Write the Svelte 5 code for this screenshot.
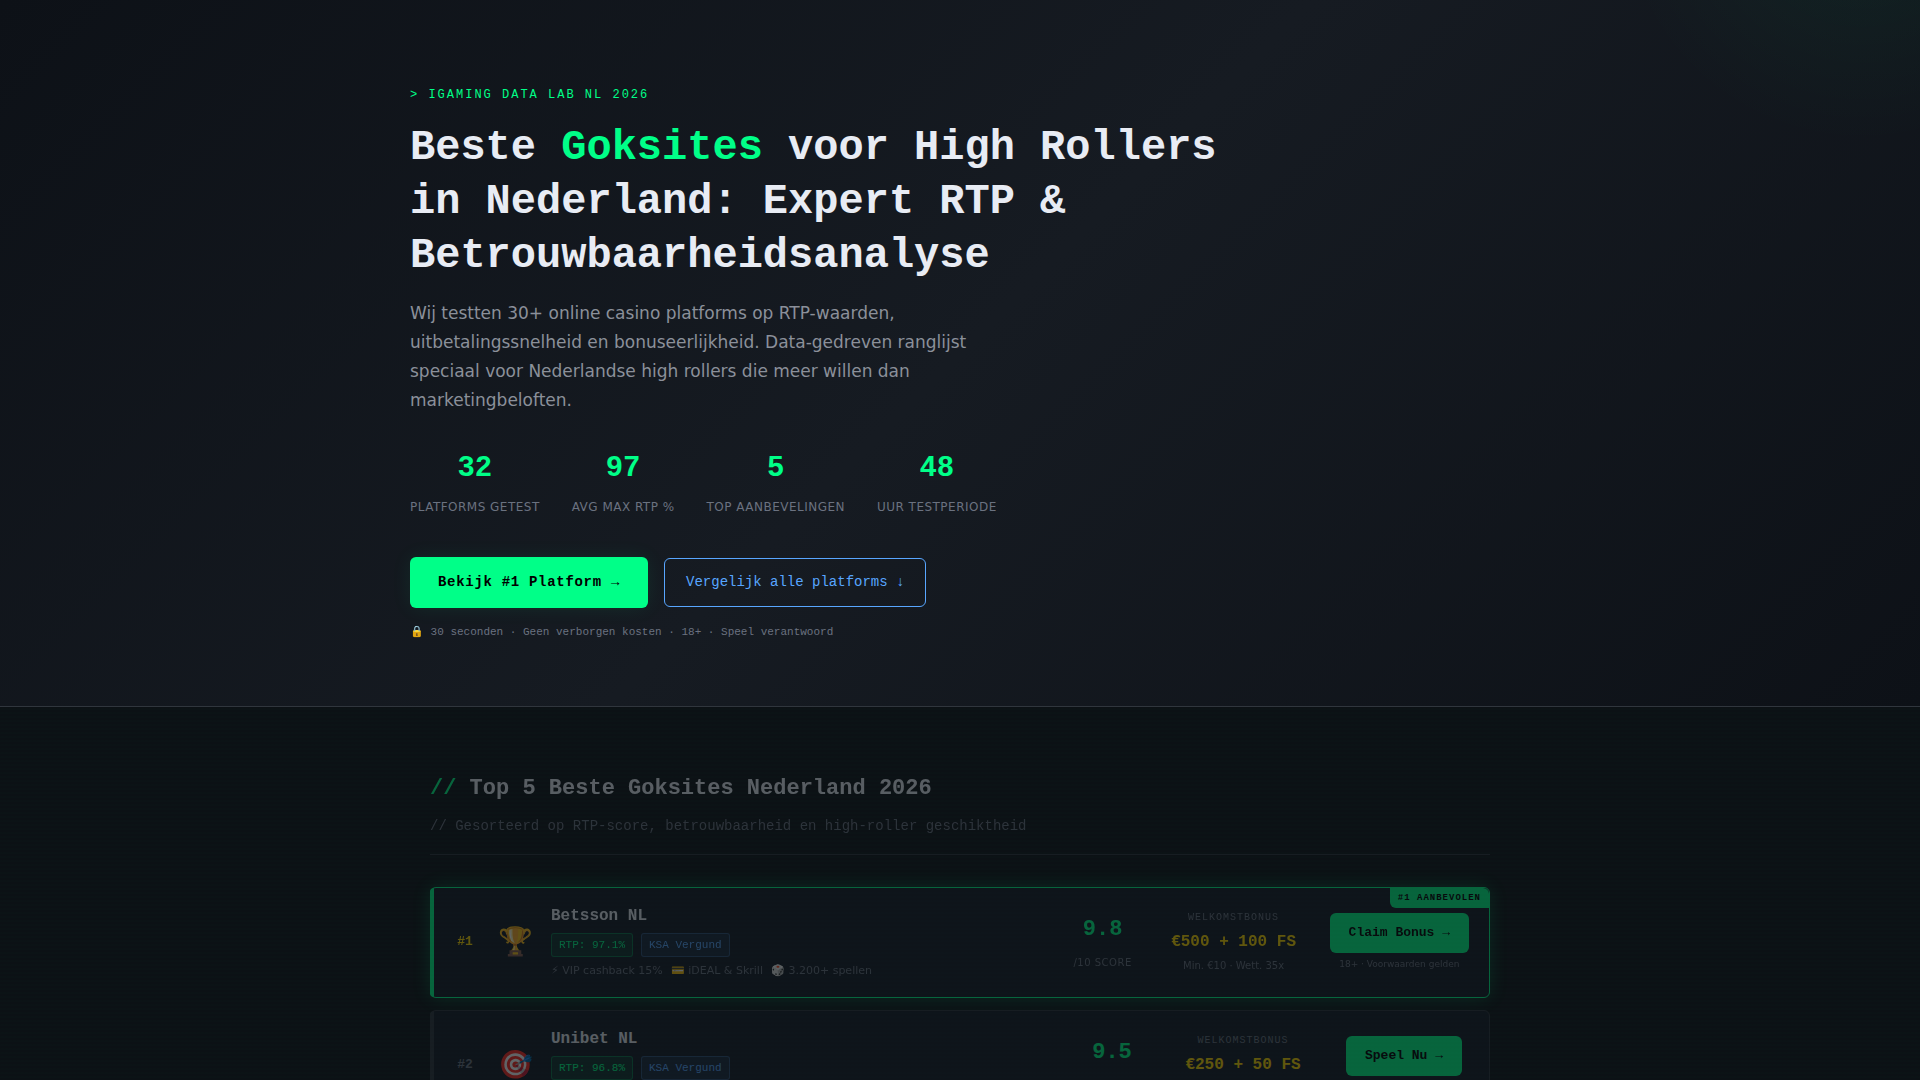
<script>
    const stats = [
        { value: '32', label: 'Platforms getest' },
        { value: '97', label: 'Avg max RTP %' },
        { value: '5', label: 'Top aanbevelingen' },
        { value: '48', label: 'Uur testperiode' }
    ];

    const sites = [
        {
            rank: 1,
            logo: '🏆',
            name: 'Betsson NL',
            rtp: '97.1%',
            features: ['⚡ VIP cashback 15%', '💳 iDEAL & Skrill', '🎲 3.200+ spellen'],
            score: '9.8',
            bonus: '€500 + 100 FS',
            terms: 'Min. €10 · Wett. 35x',
            cta: 'Claim Bonus →'
        },
        {
            rank: 2,
            logo: '🎯',
            name: 'Unibet NL',
            rtp: '96.8%',
            features: ['⚡ Snelle uitbetaling', '💳 iDEAL & Visa', '🎲 2.500+ spellen'],
            score: '9.5',
            bonus: '€250 + 50 FS',
            terms: 'Min. €10 · Wett. 35x',
            cta: 'Speel Nu →'
        }
    ];
</script>

<div class="page">
    <header class="hero">
        <div class="hero-inner">
            <p class="eyebrow">&gt; iGaming Data Lab NL 2026</p>
            <h1>Beste <span>Goksites</span> voor High Rollers in Nederland: Expert RTP &amp; Betrouwbaarheidsanalyse</h1>
            <p class="intro">Wij testten 30+ online casino platforms op RTP-waarden, uitbetalingssnelheid en bonuseerlijkheid. Data-gedreven ranglijst speciaal voor Nederlandse high rollers die meer willen dan marketingbeloften.</p>
            <div class="stats">
                {#each stats as stat}
                    <div class="stat">
                        <div class="stat-value">{stat.value}</div>
                        <div class="stat-label">{stat.label}</div>
                    </div>
                {/each}
            </div>
            <div class="actions">
                <a class="btn btn-primary" href="#site-1">Bekijk #1 Platform →</a>
                <a class="btn btn-outline" href="#top5">Vergelijk alle platforms ↓</a>
            </div>
            <p class="trust">🔒 30 seconden · Geen verborgen kosten · 18+ · Speel verantwoord</p>
        </div>
    </header>

    <main class="ranking" id="top5">
        <div class="section-head">
            <h2><span>//</span> Top 5 Beste Goksites Nederland 2026</h2>
            <p>// Gesorteerd op RTP-score, betrouwbaarheid en high-roller geschiktheid</p>
        </div>
        <div class="cards">
            {#each sites as site}
                <article class="card" class:featured={site.rank === 1} id="site-{site.rank}">
                    {#if site.rank === 1}
                        <div class="ribbon">#1 AANBEVOLEN</div>
                    {/if}
                    <div class="rank">#{site.rank}</div>
                    <div class="logo">{site.logo}</div>
                    <div class="info">
                        <h3>{site.name}</h3>
                        <div class="tags">
                            <span class="tag tag-rtp">RTP: {site.rtp}</span>
                            <span class="tag tag-ksa">KSA Vergund</span>
                        </div>
                        <div class="features">
                            {#each site.features as feature}
                                <span>{feature}</span>
                            {/each}
                        </div>
                    </div>
                    <div class="score">
                        <div class="score-value">{site.score}</div>
                        <div class="score-label">/10 SCORE</div>
                    </div>
                    <div class="bonus">
                        <div class="bonus-label">WELKOMSTBONUS</div>
                        <div class="bonus-value">{site.bonus}</div>
                        <div class="bonus-terms">{site.terms}</div>
                    </div>
                    <div class="cta">
                        <a class="btn-card" href="#site-{site.rank}">{site.cta}</a>
                        <small>18+ · Voorwaarden gelden</small>
                    </div>
                </article>
            {/each}
        </div>
    </main>
</div>

<style>
    :global(body) {
        background: #0d1117;
    }

    .page {
        --green: #00ff88;
        --blue: #58a6ff;
        --gold: #ffd700;
        --text: #e8ecf4;
        --muted: #8b909a;
        --dim: #6b7280;
        --line: #30363d;
        --mono: "Liberation Mono", "Courier New", monospace;
        height: 100vh;
        overflow: hidden;
        background: repeating-linear-gradient(0deg, transparent, transparent 2px, rgba(0, 255, 136, 0.008) 2px, rgba(0, 255, 136, 0.008) 4px), #0c1115;
        color: var(--text);
        font-family: "DejaVu Sans", sans-serif;
    }

    h1,
    h2,
    h3,
    p {
        margin: 0;
    }

    a {
        text-decoration: none;
    }

    .hero {
        position: relative;
        overflow: hidden;
        padding: 80px 20px 64px;
        border-bottom: 1px solid var(--line);
        background: linear-gradient(135deg, #0d1117 0%, #161b22 50%, #0d1117 100%);
    }

    .hero::before {
        content: "";
        position: absolute;
        top: -50%;
        right: -10%;
        width: 500px;
        height: 500px;
        background: radial-gradient(circle, rgba(0, 255, 136, 0.06) 0%, transparent 70%);
    }

    .hero-inner {
        position: relative;
        max-width: 1100px;
        margin: 0 auto;
    }

    .eyebrow {
        margin-bottom: 11px;
        color: var(--green);
        font-family: var(--mono);
        font-size: 12px;
        line-height: 30px;
        letter-spacing: 2px;
        text-transform: uppercase;
    }

    h1 {
        max-width: 840px;
        margin-bottom: 16px;
        font-family: var(--mono);
        font-size: 42px;
        line-height: 54px;
    }

    h1 span,
    h2 span {
        color: var(--green);
    }

    .intro {
        max-width: 600px;
        margin-bottom: 29px;
        color: var(--muted);
        font-size: 17px;
        line-height: 29px;
    }

    .stats {
        display: flex;
        flex-wrap: wrap;
        gap: 32px;
        margin-bottom: 40px;
        text-align: center;
    }

    .stat-value {
        color: var(--green);
        font-family: var(--mono);
        font-size: 29px;
        font-weight: 700;
        line-height: 49px;
    }

    .stat-label {
        margin-top: 4px;
        color: var(--dim);
        font-size: 12px;
        line-height: 20px;
        letter-spacing: 0.04em;
        text-transform: uppercase;
    }

    .actions {
        display: flex;
        flex-wrap: wrap;
        align-items: center;
        gap: 16px;
        margin-bottom: 15px;
    }

    .btn {
        border-radius: 6px;
        font-family: var(--mono);
        font-size: 14px;
        line-height: 23px;
    }

    .btn-primary {
        padding: 14px 28px;
        background: var(--green);
        box-shadow: 0 0 20px rgba(0, 255, 136, 0.08);
        color: #000;
        font-weight: 700;
        letter-spacing: 0.05em;
    }

    .btn-outline {
        padding: 12px 21px;
        border: 1px solid var(--blue);
        color: var(--blue);
    }

    .trust {
        margin-bottom: 1px;
        color: var(--dim);
        font-family: var(--mono);
        font-size: 11px;
        line-height: 18px;
    }

    .ranking {
        max-width: 1060px;
        margin: 0 auto;
        padding: 63px 20px;
        opacity: 0.35;
    }

    .section-head {
        margin-bottom: 32px;
        padding-bottom: 16px;
        border-bottom: 1px solid var(--line);
    }

    h2 {
        font-family: var(--mono);
        font-size: 22px;
        line-height: 38px;
    }

    .section-head p {
        margin-top: 6px;
        color: var(--dim);
        font-family: var(--mono);
        font-size: 14px;
        line-height: 24px;
    }

    .cards {
        display: flex;
        flex-direction: column;
        gap: 12px;
    }

    .card {
        position: relative;
        display: grid;
        grid-template-columns: 28px 40px 1fr 70px 160px minmax(130px, auto);
        align-items: center;
        gap: 16px;
        padding: 15px 20px 17px;
        border: 1px solid var(--line);
        border-radius: 6px;
        background: #161b26;
    }

    .card::before {
        content: "";
        position: absolute;
        top: 0;
        bottom: 0;
        left: -1px;
        width: 4px;
        border-radius: 6px 0 0 6px;
        background: var(--line);
    }

    .featured {
        border-color: var(--green);
        box-shadow: 0 0 20px rgba(0, 255, 136, 0.3);
    }

    .featured::before {
        background: var(--green);
    }

    .ribbon {
        position: absolute;
        top: 0;
        right: 0;
        padding: 2px 8px;
        border-radius: 0 6px 0 6px;
        background: var(--green);
        color: #000;
        font-family: var(--mono);
        font-size: 9px;
        font-weight: 700;
        line-height: 16px;
        letter-spacing: 1px;
    }

    .rank {
        color: var(--dim);
        font-family: var(--mono);
        font-size: 13px;
        font-weight: 700;
        text-align: center;
    }

    .featured .rank {
        color: var(--gold);
    }

    .logo {
        display: flex;
        justify-content: center;
        font-size: 28px;
        line-height: 48px;
    }

    h3 {
        margin-bottom: 4px;
        font-family: var(--mono);
        font-size: 16px;
        line-height: 26px;
    }

    .tags {
        display: flex;
        gap: 8px;
        margin-bottom: 4px;
    }

    .tag {
        padding: 2px 7px;
        border: 1px solid;
        border-radius: 3px;
        font-family: var(--mono);
        font-size: 11px;
        line-height: 18px;
    }

    .tag-rtp {
        border-color: rgba(0, 255, 136, 0.3);
        background: rgba(0, 255, 136, 0.1);
        color: var(--green);
    }

    .tag-ksa {
        border-color: rgba(88, 166, 255, 0.3);
        background: rgba(88, 166, 255, 0.1);
        color: var(--blue);
    }

    .features {
        display: flex;
        gap: 8px;
        color: var(--dim);
        font-size: 11px;
        line-height: 19px;
    }

    .score,
    .bonus,
    .cta {
        text-align: center;
    }

    .score-value {
        color: var(--green);
        font-family: var(--mono);
        font-size: 22px;
        font-weight: 700;
        line-height: 38px;
    }

    .score-label {
        margin-top: 5px;
        color: var(--dim);
        font-size: 10px;
        line-height: 18px;
        letter-spacing: 0.05em;
    }

    .bonus-label {
        color: var(--dim);
        font-family: var(--mono);
        font-size: 10px;
        line-height: 18px;
        letter-spacing: 1px;
    }

    .bonus-value {
        color: var(--gold);
        font-family: var(--mono);
        font-size: 16px;
        font-weight: 700;
        line-height: 30px;
    }

    .bonus-terms {
        color: var(--dim);
        font-size: 10px;
        line-height: 18px;
    }

    .btn-card {
        display: inline-block;
        padding: 9px 19px;
        border-radius: 6px;
        background: var(--green);
        color: #000;
        font-family: var(--mono);
        font-size: 13px;
        font-weight: 700;
        line-height: 22px;
    }

    .cta small {
        display: block;
        margin-top: 4px;
        color: var(--dim);
        font-size: 9px;
        line-height: 14px;
    }
</style>
